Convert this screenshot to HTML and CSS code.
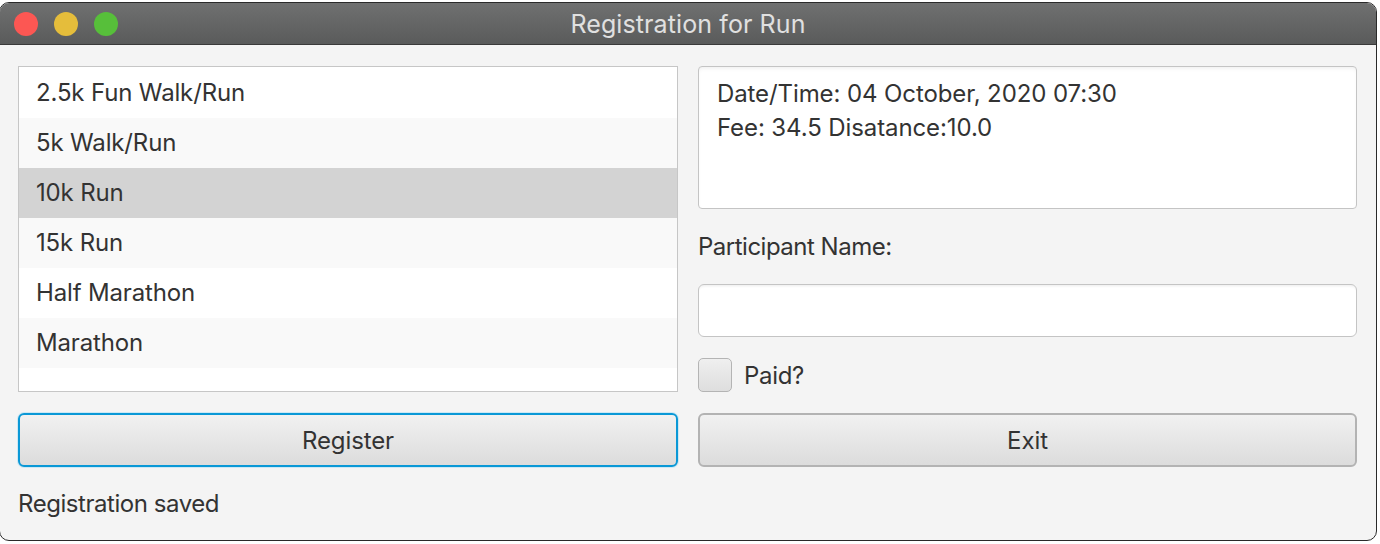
FILE: index.html
```html
<!DOCTYPE html>
<html>
<head>
<meta charset="utf-8">
<link rel="stylesheet" href="styles.css">
</head>
<body>
<div class="window">
  <div class="titlebar">
    <div class="lights">
      <span class="light red"></span>
      <span class="light yellow"></span>
      <span class="light green"></span>
    </div>
    <div class="title">Registration for Run</div>
  </div>
  <div class="content">
    <div class="grid">
      <div class="list">
        <div class="row">2.5k Fun Walk/Run</div>
        <div class="row alt">5k Walk/Run</div>
        <div class="row selected">10k Run</div>
        <div class="row alt">15k Run</div>
        <div class="row">Half Marathon</div>
        <div class="row alt">Marathon</div>
      </div>
      <div class="right">
        <div class="textarea">
          <div>Date/Time: 04 October, 2020 07:30</div>
          <div>Fee: 34.5 Disatance:10.0</div>
        </div>
        <div class="label">Participant Name:</div>
        <div class="textfield"></div>
        <div class="check-row">
          <span class="checkbox"></span>
          <span class="check-label">Paid?</span>
        </div>
      </div>
      <div class="button focused">Register</div>
      <div class="button">Exit</div>
    </div>
    <div class="status">Registration saved</div>
  </div>
</div>
</body>
</html>
```
FILE: styles.css
```css
html, body {
  margin: 0;
  padding: 0;
  background: #ffffff;
  width: 1380px;
  height: 544px;
  overflow: hidden;
}
body {
  font-family: "Inter", "Liberation Sans", sans-serif;
  color: #333333;
}
.window {
  margin: 2px 0 0 -1px;
  width: 1378px;
  height: 539px;
  border: 1px solid #2a2a2a;
  border-radius: 10px;
  overflow: hidden;
  background: #f4f4f4;
  box-sizing: border-box;
  display: flex;
  flex-direction: column;
}
.titlebar {
  height: 41px;
  flex: none;
  background: linear-gradient(#6f7070, #5a5b5b);
  border-bottom: 1px solid #3a3a3a;
  position: relative;
  display: flex;
  align-items: center;
  justify-content: center;
}
.lights {
  position: absolute;
  left: 14px;
  top: 9px;
  display: flex;
  gap: 16px;
}
.light {
  width: 24px;
  height: 24px;
  border-radius: 50%;
  display: block;
}
.red { background: #fc5753; }
.yellow { background: #e5bd3b; }
.green { background: #57bf3a; }
.title {
  color: #e0e0e0;
  font-size: 25px;
  letter-spacing: 0.1px;
}
.content {
  flex: 1;
  padding: 21px 19px 0 18px;
}
.grid {
  display: grid;
  grid-template-columns: 660px 659px;
  grid-template-rows: 326px 54px;
  column-gap: 20px;
  row-gap: 21px;
}
.list {
  border: 1px solid #c6c6c6;
  background: #ffffff;
  padding-top: 1px;
  box-sizing: border-box;
}
.row {
  height: 50px;
  line-height: 50px;
  padding-left: 17px;
  font-size: 24px;
  letter-spacing: -0.15px;
  background: #ffffff;
}
.row.alt { background: #f9f9f9; }
.row.selected { background: #d3d3d3; }
.right {
  display: flex;
  flex-direction: column;
}
.textarea {
  height: 143px;
  box-sizing: border-box;
  border: 1px solid #c4c4c4;
  border-radius: 4px;
  background: #ffffff;
  box-shadow: inset 0 3px 4px -2px rgba(0,0,0,0.08);
  padding: 10px 18px;
  font-size: 24px;
  line-height: 34px;
  letter-spacing: -0.1px;
}
.label {
  font-size: 24px;
  letter-spacing: -0.5px;
  height: 75px;
  line-height: 76px;
}
.textfield {
  height: 53px;
  box-sizing: border-box;
  border: 1px solid #c4c4c4;
  border-radius: 6px;
  background: #ffffff;
  box-shadow: inset 0 3px 3px -2px rgba(0,0,0,0.08);
}
.check-row {
  margin-top: 21px;
  display: flex;
  align-items: center;
  gap: 12px;
}
.checkbox {
  width: 34px;
  height: 34px;
  box-sizing: border-box;
  border: 1px solid #b4b4b4;
  border-radius: 5px;
  background: linear-gradient(#efefef, #dedede);
  display: block;
}
.check-label {
  font-size: 24px;
  letter-spacing: -0.3px;
}
.button {
  box-sizing: border-box;
  height: 54px;
  border: 2px solid #b3b3b3;
  border-radius: 6px;
  background: linear-gradient(#f1f1f1, #dcdcdc);
  display: flex;
  align-items: center;
  justify-content: center;
  font-size: 24px;
  letter-spacing: -0.1px;
}
.button.focused {
  border: 2px solid #0a98d6;
  box-shadow: 0 0 0 1px #cde8f4;
}
.status {
  margin-top: 22px;
  padding-left: 0;
  font-size: 24px;
  letter-spacing: -0.45px;
}
```
